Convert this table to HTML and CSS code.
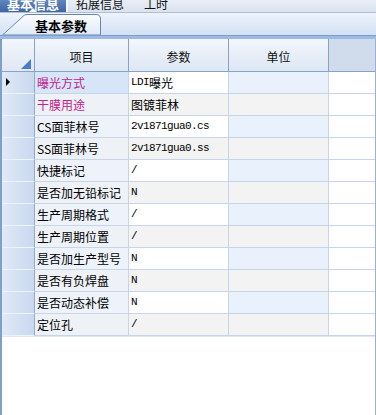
FILE: index.html
```html
<!DOCTYPE html>
<html>
<head>
<meta charset="utf-8">
<link rel="stylesheet" href="styles.css">
</head>
<body>
<div class="page">
  <div class="topbar">
    <div class="ttab active">基本信息<span class="pointer"></span></div>
    <div class="ttab">拓展信息</div>
    <div class="ttab">工时</div>
  </div>
  <div class="strip">
    <div class="ptab">
      <svg class="ptab-bg" width="100" height="21" viewBox="0 0 100 21">
        <defs>
          <linearGradient id="tg" x1="0" y1="0" x2="0" y2="1">
            <stop offset="0" stop-color="#fbfdff"/>
            <stop offset="1" stop-color="#dfe9f7"/>
          </linearGradient>
        </defs>
        <path d="M0.5 21 L22 1.5 Q23 0.5 25 0.5 L94 0.5 Q98.5 0.5 98.5 5 L98.5 21 Z" fill="url(#tg)" stroke="#6a86ad" stroke-width="1"/>
      </svg>
      <span class="ptab-text">基本参数</span>
    </div>
  </div>
  <div class="band"></div>
  <div class="grid">
    <div class="hrow">
      <div class="rh corner"><span class="tri"></span></div>
      <div class="hc c1">项目</div>
      <div class="hc c2">参数</div>
      <div class="hc c3">单位</div>
      <div class="hc c4"></div>
    </div>
    <div class="row odd">
      <div class="rh"><span class="ind"></span></div>
      <div class="bc c1 sel pink">曝光方式</div>
      <div class="bc c2"><span class="mono">LDI</span>曝光</div>
      <div class="bc c3"></div>
      <div class="bc c4"></div>
    </div>
    <div class="row even">
      <div class="rh"></div>
      <div class="bc c1 pink">干膜用途</div>
      <div class="bc c2">图镀菲林</div>
      <div class="bc c3"></div>
      <div class="bc c4"></div>
    </div>
    <div class="row odd">
      <div class="rh"></div>
      <div class="bc c1">CS面菲林号</div>
      <div class="bc c2"><span class="mono">2v1871gua0.cs</span></div>
      <div class="bc c3"></div>
      <div class="bc c4"></div>
    </div>
    <div class="row even">
      <div class="rh"></div>
      <div class="bc c1">SS面菲林号</div>
      <div class="bc c2"><span class="mono">2v1871gua0.ss</span></div>
      <div class="bc c3"></div>
      <div class="bc c4"></div>
    </div>
    <div class="row odd">
      <div class="rh"></div>
      <div class="bc c1">快捷标记</div>
      <div class="bc c2"><span class="mono">/</span></div>
      <div class="bc c3"></div>
      <div class="bc c4"></div>
    </div>
    <div class="row even">
      <div class="rh"></div>
      <div class="bc c1">是否加无铅标记</div>
      <div class="bc c2"><span class="mono">N</span></div>
      <div class="bc c3"></div>
      <div class="bc c4"></div>
    </div>
    <div class="row odd">
      <div class="rh"></div>
      <div class="bc c1">生产周期格式</div>
      <div class="bc c2"><span class="mono">/</span></div>
      <div class="bc c3"></div>
      <div class="bc c4"></div>
    </div>
    <div class="row even">
      <div class="rh"></div>
      <div class="bc c1">生产周期位置</div>
      <div class="bc c2"><span class="mono">/</span></div>
      <div class="bc c3"></div>
      <div class="bc c4"></div>
    </div>
    <div class="row odd">
      <div class="rh"></div>
      <div class="bc c1">是否加生产型号</div>
      <div class="bc c2"><span class="mono">N</span></div>
      <div class="bc c3"></div>
      <div class="bc c4"></div>
    </div>
    <div class="row even">
      <div class="rh"></div>
      <div class="bc c1">是否有负焊盘</div>
      <div class="bc c2"><span class="mono">N</span></div>
      <div class="bc c3"></div>
      <div class="bc c4"></div>
    </div>
    <div class="row odd">
      <div class="rh"></div>
      <div class="bc c1">是否动态补偿</div>
      <div class="bc c2"><span class="mono">N</span></div>
      <div class="bc c3"></div>
      <div class="bc c4"></div>
    </div>
    <div class="row even">
      <div class="rh"></div>
      <div class="bc c1">定位孔</div>
      <div class="bc c2"><span class="mono">/</span></div>
      <div class="bc c3"></div>
      <div class="bc c4"></div>
    </div>
    <div class="empty"></div>
  </div>
</div>
</body>
</html>
```
FILE: styles.css
```css
html, body {
  margin: 0;
  padding: 0;
  background: #ffffff;
}
.page {
  width: 376px;
  height: 415px;
  overflow: hidden;
  display: flex;
  flex-direction: column;
  font-family: "Noto Sans CJK SC", "DejaVu Sans", sans-serif;
  font-size: 12px;
  color: #000;
}
.topbar {
  height: 12px;
  flex: none;
  display: flex;
  background: linear-gradient(#e9eef6, #d9e3ef);
  border-bottom: 1px solid #aebfd6;
  overflow: hidden;
}
.ttab {
  position: relative;
  line-height: 12px;
  font-size: 12px;
  margin-top: -5px;
  height: 17px;
  box-sizing: border-box;
  padding: 3px 0 0 0;
  color: #111;
}
.ttab:nth-child(2) { padding-left: 8px; }
.ttab:nth-child(3) { padding-left: 20px; }
.ttab.active {
  width: 68px;
  text-align: center;
  color: #fff;
  font-weight: bold;
  font-size: 13px;
  background: linear-gradient(#6d93c9, #3e66a3);
  border-right: 2px solid #f3f6fb;
}
.pointer {
  position: absolute;
  left: 29px;
  bottom: 0;
  width: 0;
  height: 0;
  border-left: 4px solid transparent;
  border-right: 4px solid transparent;
  border-bottom: 4px solid #ffffff;
}
.strip {
  height: 22px;
  flex: none;
  background: linear-gradient(#eef3fb, #d2e1f5);
  display: flex;
  align-items: flex-end;
  padding-left: 2px;
}
.ptab {
  position: relative;
  width: 100px;
  height: 21px;
  display: flex;
  align-items: center;
  justify-content: center;
}
.ptab-bg {
  position: absolute;
  left: 0;
  top: 0;
}
.ptab-text {
  position: relative;
  font-weight: bold;
  font-size: 13px;
  padding-left: 18px;
  padding-top: 1px;
  color: #000;
}
.band {
  height: 4px;
  box-sizing: border-box;
  flex: none;
  background: #9dbbe2;
  border-top: 1px solid #7b9dcc;
}
.grid {
  flex: 1;
  display: flex;
  flex-direction: column;
  border-left: 2px solid #7f9fcb;
  border-right: 1px solid #9bb2cf;
  width: 373px;
}
.hrow {
  display: flex;
  height: 33px;
  flex: none;
  border-bottom: 1px solid #8aa3c2;
  box-sizing: border-box;
}
.row {
  display: flex;
  height: 22px;
  flex: none;
  box-sizing: border-box;
}
.rh {
  width: 33px;
  flex: none;
  box-sizing: border-box;
  position: relative;
  background: linear-gradient(90deg, #e0e9f6, #c8d8ef);
  border-right: 1px solid #93abcb;
  border-bottom: 1px solid #eef3fa;
}
.corner {
  background: linear-gradient(#f3f6fb, #e0e8f4);
  border-right: 1px solid #8aa3c2;
  border-bottom: none;
}
.tri {
  position: absolute;
  right: 3px;
  bottom: 2px;
  width: 0;
  height: 0;
  border-left: 10px solid transparent;
  border-bottom: 10px solid #4b7cc6;
}
.ind {
  position: absolute;
  left: 4px;
  top: 6px;
  width: 0;
  height: 0;
  border-top: 4px solid transparent;
  border-bottom: 4px solid transparent;
  border-left: 4px solid #000;
}
.c1 { width: 94px; }
.c2 { width: 100px; }
.c3 { width: 100px; }
.c4 { flex: 1; }
.hc {
  flex-shrink: 0;
  box-sizing: border-box;
  display: flex;
  align-items: center;
  justify-content: center;
  padding-top: 2px;
  background: linear-gradient(#f3f6fc, #dde7f5);
  border-right: 1px solid #8aa3c2;
  color: #111;
}
.hc.c4 {
  background: #d0dcec;
  border-right: none;
}
.bc {
  flex-shrink: 0;
  box-sizing: border-box;
  display: flex;
  align-items: center;
  padding-left: 2px;
  border-right: 1px solid #c6d5ea;
  border-bottom: 1px solid #c6d5ea;
  white-space: nowrap;
  overflow: hidden;
  line-height: 21px;
}
.bc.c4 {
  border-right: none;
  background: #ffffff;
}
.odd .c1 { background: #eef3fb; }
.odd .c2 { background: #ffffff; }
.odd .c3 { background: #e9f1fc; }
.even .c1 { background: #eef1f6; }
.even .c2 { background: #f3f3f3; }
.even .c3 { background: #f3f3f3; }
.odd .c1.sel { background: #d7e5f8; }
.pink { color: #c0228c; }
.mono {
  font-family: "Liberation Mono", "DejaVu Sans Mono", monospace;
  font-size: 11px;
  letter-spacing: -0.6px;
}
.empty {
  flex: 1;
  background: #ffffff;
  border-top: 1px solid #dfe7f2;
}
```
